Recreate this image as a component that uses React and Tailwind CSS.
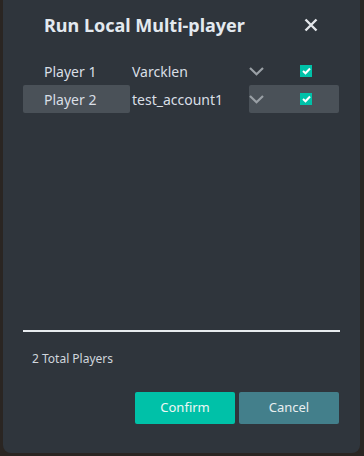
import React from "react";

function Chevron() {
  return (
    <svg width="15" height="9" viewBox="0 0 15 9" fill="none">
      <path d="M1 1 L7.5 7.3 L14 1" stroke="#9aa0a6" strokeWidth="2.2" />
    </svg>
  );
}

function Check() {
  return (
    <div className="w-[12px] h-[12px] bg-[#00c1a8] flex items-center justify-center">
      <svg width="9" height="8" viewBox="0 0 9 8" fill="none">
        <path d="M1 4 L3.5 6.3 L8 1.5" stroke="#ffffff" strokeWidth="2" />
      </svg>
    </div>
  );
}

function Row({ name, account, highlight }) {
  return (
    <div className="flex items-center h-[28px]">
      <div className={`w-[107px] h-full flex items-center pl-[21px] rounded-[2px] ${highlight ? "bg-[#4a5158]" : ""}`}>
        {name}
      </div>
      <div className="w-[119px] pl-[2px]">{account}</div>
      <div className={`w-[90px] h-full flex items-center rounded-[2px] ${highlight ? "bg-[#4a5158]" : ""}`}>
        <div className="w-[51px] flex"><Chevron /></div>
        <Check />
      </div>
    </div>
  );
}

export default function App() {
  return (
    <div className="w-[364px] h-[456px] bg-[#2a2522] flex" style={{ fontFamily: '"Noto Sans", "Open Sans", sans-serif' }}>
      <div className="ml-[3px] w-[357px] h-[453px] bg-[#2f353c] rounded-b-[8px] flex flex-col text-[#d9dfe6]">
        <div className="flex items-center h-[50px] pl-[41px] pr-[42px] justify-between">
          <div className="text-[18px] font-bold text-[#e3e9ef] tracking-[0px]">Run Local Multi-player</div>
          <svg width="14" height="14" viewBox="0 0 14 14">
            <path d="M1.5 1.5 L12.5 12.5 M12.5 1.5 L1.5 12.5" stroke="#e3e6ea" strokeWidth="2.4" />
          </svg>
        </div>
        <div className="pl-[20px] pt-[7px] text-[14px] flex flex-col">
          <Row name="Player 1" account="Varcklen" />
          <Row name="Player 2" account="test_account1" highlight />
        </div>
        <div className="flex-1" />
        <div className="mx-[20px] h-[2px] bg-[#e8ecef]" />
        <div className="pl-[29px] pt-[18px] text-[12px] text-[#d0d6dd]">2 Total Players</div>
        <div className="flex justify-end gap-[4px] pr-[21px] pt-[24px] pb-[29px]">
          <button className="w-[100px] h-[32px] bg-[#00c1a8] text-[#eef7f5] text-[13px] rounded-[2px]">Confirm</button>
          <button className="w-[100px] h-[32px] bg-[#437f8b] text-[#e8eef0] text-[13px] rounded-[2px]">Cancel</button>
        </div>
      </div>
    </div>
  );
}
